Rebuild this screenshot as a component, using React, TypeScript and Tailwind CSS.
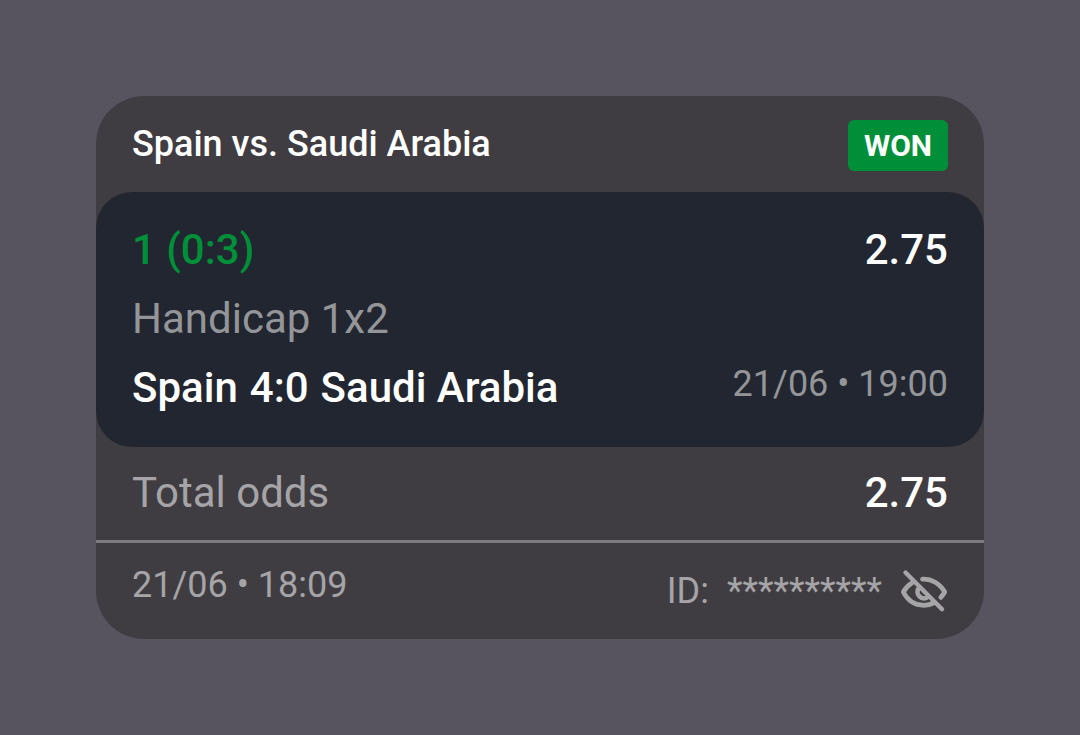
import { useState } from "react";

function EyeOffIcon() {
  return (
    <svg
      viewBox="0 0 48 48"
      className="size-12"
      fill="none"
      stroke="currentColor"
      strokeWidth="4.7"
      strokeLinecap="round"
      strokeLinejoin="round"
      aria-hidden="true"
    >
      <path d="M5.5 5.5 42 42.200" strokeWidth="4.400" />
      <path d="M12.200 15.800C8.500 18 5.500 21.100 3.300 25 7.600 33.400 15.200 38.300 24 38.300c3.600 0 6.900-.8 9.900-2.400" />
      <path d="M22.500 12.200c9-.6 17.500 4.300 22.200 12.800-1.100 2-2.400 3.800-3.900 5.400" />
      <path d="M19.400 20.500a6.200 6.200 0 0 0 9 8.900" />
      <path d="M23.700 22.800v2.700h2.800" strokeWidth="2.200" />
    </svg>
  );
}

export default function App() {
  const [visible, setVisible] = useState(false);

  return (
    <main className="flex min-h-screen items-center justify-center bg-[#575460] px-24 py-12 font-['Roboto',sans-serif] text-[#a5a4a7]">
      <article className="w-full overflow-hidden rounded-[48px] bg-[#403d42]">
        <header className="flex h-24 items-start justify-between px-9 pt-6">
          <h1 className="text-4xl leading-[48px] font-medium text-white">Spain vs. Saudi Arabia</h1>
          <span className="rounded-md bg-[#008f39] px-4 py-2 text-[30px] leading-[35px] font-bold text-white">
            WON
          </span>
        </header>

        <section className="rounded-[36px] bg-[#222630] px-9 pt-[23px] pb-[25px]">
          <div className="flex items-center justify-between text-[42px] leading-[69px] font-medium">
            <p className="text-[#008f39]">1 (0:3)</p>
            <p className="text-white">2.75</p>
          </div>
          <p className="text-[42px] leading-[69px] text-[#949599]">Handicap 1x2</p>
          <div className="flex items-start justify-between">
            <p className="flex gap-3 text-[42px] leading-[69px] font-medium text-white">
              <span>Spain</span>
              <span>4:0</span>
              <span>Saudi Arabia</span>
            </p>
            <time className="text-4xl leading-[62px] text-[#949599]">21/06 • 19:00</time>
          </div>
        </section>

        <section className="flex h-24 items-center justify-between border-b-3 border-[#7d7b7e] px-9 pb-0.5 text-[42px]">
          <p>Total odds</p>
          <p className="font-medium text-white">2.75</p>
        </section>

        <footer className="flex h-24 items-center justify-between px-9 text-4xl">
          <time className="pb-3">21/06 • 18:09</time>
          <div className="flex items-center gap-[18px]">
            <span>ID:</span>
            <span>{visible ? "2106180975" : "**********"}</span>
            <button
              type="button"
              aria-label="Toggle ID visibility"
              aria-pressed={visible}
              onClick={() => setVisible(!visible)}
            >
              <EyeOffIcon />
            </button>
          </div>
        </footer>
      </article>
    </main>
  );
}
